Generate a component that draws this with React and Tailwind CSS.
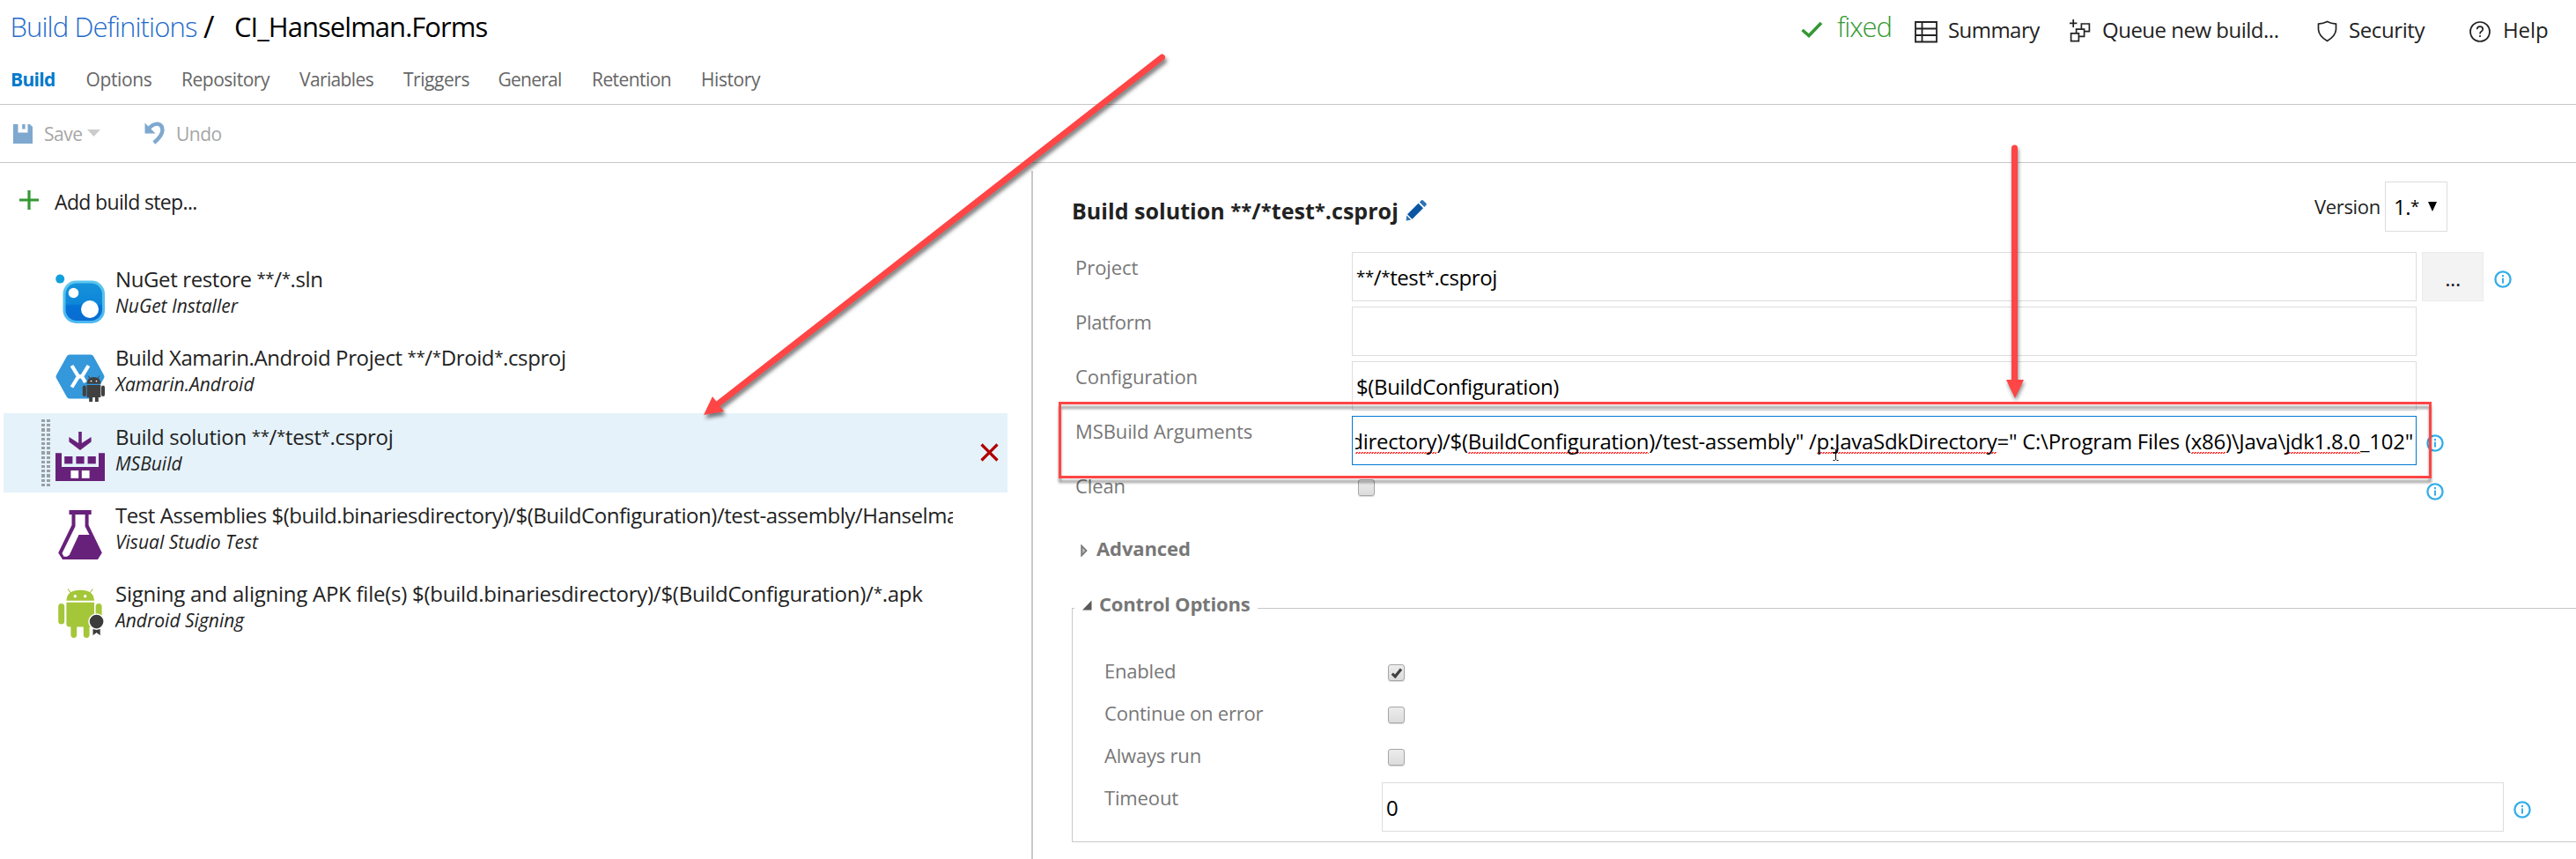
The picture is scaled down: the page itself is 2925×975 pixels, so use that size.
import React from "react";

/* Text in which asterisks are drawn smaller and raised. */
function Glob({ text, bold }) {
  const star = bold
    ? "text-[0.88em] leading-[0] align-[0.1em]"
    : "text-[0.78em] leading-[0] align-[0.17em]";
  return text.split(/(\*)/).map((part, i) =>
    part === "*" ? (
      <span key={i} className={star}>*</span>
    ) : (
      <React.Fragment key={i}>{part}</React.Fragment>
    )
  );
}

/* ---------- Icons ---------- */

function InfoIcon({ className = "" }) {
  return (
    <svg className={"h-[20px] w-[20px] shrink-0 " + className} viewBox="0 0 20 20" fill="none">
      <circle cx="10" cy="10" r="8.6" stroke="#35aee8" strokeWidth="2.3" />
      <rect x="9" y="5" width="2" height="2.2" fill="#35aee8" />
      <rect x="9" y="8.6" width="2" height="6" fill="#35aee8" />
    </svg>
  );
}

function CheckBox({ checked, className = "" }) {
  return (
    <span
      className={
        "flex h-[19px] w-[19px] shrink-0 items-center justify-center rounded-[3px] border-[1.5px] border-[#a6a6a6] bg-linear-to-b from-[#ececec] to-[#dcdcdc] shadow-[0_1px_1px_rgba(0,0,0,0.15)] " +
        className
      }
    >
      {checked && (
        <svg className="h-[14px] w-[14px]" viewBox="0 0 14 14" fill="none">
          <path d="M1.8 7.6 L5.2 10.8 L12 2.4" stroke="#404040" strokeWidth="3.2" />
        </svg>
      )}
    </span>
  );
}

function NuGetIcon() {
  return (
    <svg className="h-[56px] w-[56px]" viewBox="0 0 56 56">
      <defs>
        <linearGradient id="nuget-body" x1="0" y1="0" x2="0" y2="1">
          <stop offset="0" stopColor="#1592da" />
          <stop offset="0.55" stopColor="#0e86d8" />
          <stop offset="0.6" stopColor="#0472d6" />
          <stop offset="1" stopColor="#0a6cd0" />
        </linearGradient>
        <linearGradient id="nuget-rim" x1="0" y1="0" x2="0" y2="1">
          <stop offset="0" stopColor="#5cc6ee" />
          <stop offset="1" stopColor="#4cb8f2" />
        </linearGradient>
      </defs>
      <circle cx="5.2" cy="5.6" r="5" fill="#12a0dc" />
      <rect x="8.5" y="7.5" width="47.5" height="48.5" rx="15" fill="url(#nuget-rim)" />
      <rect x="11.5" y="10.5" width="41.5" height="42.5" rx="12.5" fill="url(#nuget-body)" />
      <circle cx="20.5" cy="21.5" r="5.8" fill="#fff" />
      <circle cx="39" cy="40" r="10" fill="#fff" />
    </svg>
  );
}

function XamarinIcon() {
  return (
    <svg className="h-[56px] w-[56px]" viewBox="0 0 56 56">
      <path
        d="M16 3.5 H40 Q41.5 3.5 42.3 5 L54 26 Q55 27.5 54 29 L42.3 50 Q41.5 51.5 40 51.5 H16 Q14.5 51.5 13.7 50 L2 29 Q1 27.5 2 26 L13.7 5 Q14.5 3.5 16 3.5 Z"
        fill="#3498db"
        stroke="#3498db"
        strokeWidth="2"
      />
      <path d="M18.5 15 L26 27.3 L18.5 39.5 M37.5 15 L30 27.3 L34 34" stroke="#fff" strokeWidth="4.2" fill="none" />
      <path d="M24 27.3 H32" stroke="#fff" strokeWidth="4.5" />
      <g fill="#404040">
        <rect x="30.8" y="37.5" width="4" height="12.5" rx="2" />
        <rect x="52" y="37.5" width="4" height="12.5" rx="2" />
        <path d="M35.6 35.8 Q35.6 28 43.5 28 Q51.4 28 51.4 35.8 Z" />
        <path d="M35.6 37 H51.4 V51 H48.8 V56 H44.9 V51 H42.1 V56 H38.2 V51 H35.6 Z" />
        <path d="M37 26.5 L39.5 30 M50 26.5 L47.5 30" stroke="#404040" strokeWidth="1" />
      </g>
      <circle cx="40.5" cy="32.6" r="0.9" fill="#fff" />
      <circle cx="46.5" cy="32.6" r="0.9" fill="#fff" />
    </svg>
  );
}

function MSBuildIcon() {
  return (
    <svg className="h-[56px] w-[56px]" viewBox="0 0 56 56">
      <g fill="#68217a">
        <path d="M26.2 0 H29.8 V13 L40.6 6 V11.5 L28 21 L15.4 11.5 V6 L26.2 13 Z" />
        <path d="M0 24.3 H7 V40 H49 V24.3 H56 V56 H0 Z" />
        <rect x="10.2" y="28" width="9.2" height="8.4" />
        <rect x="23.4" y="28" width="9.2" height="8.4" />
        <rect x="36.6" y="28" width="9.2" height="8.4" />
      </g>
      <rect x="17.4" y="44" width="8.8" height="8.8" fill="#fff" />
      <rect x="29.8" y="44" width="8.8" height="8.8" fill="#fff" />
    </svg>
  );
}

function FlaskIcon() {
  return (
    <svg className="h-[56px] w-[56px]" viewBox="0 0 56 56">
      <path
        fill="#68217a"
        fillRule="evenodd"
        d="M15.5 0 H40.7 V5 H37.6 V17 L52.8 48.5 L48 56 H8 L3.2 48.5 L18.5 17 V5 H15.5 Z M22.5 5 V18.5 L7.5 49 L9.5 52.8 H13 L15.8 51 L26.5 28 H38.5 L33.6 18.5 V5 Z"
      />
    </svg>
  );
}

function AndroidSigningIcon() {
  return (
    <svg className="h-[56px] w-[56px]" viewBox="0 0 56 56">
      <g fill="#a4c639">
        <path d="M12.4 13.8 Q13 5 20.5 2.8 Q28 0.6 36 2.8 Q43.4 5 44 13.8 Z" />
        <path d="M14 0.5 L17.5 5 M42.4 0.5 L38.9 5" stroke="#a4c639" strokeWidth="1.2" />
        <path d="M12.4 15.8 H44 V40 Q44 43.5 40.5 43.5 H38.6 V52.6 A3.4 3.4 0 0 1 31.8 52.6 V43.5 H24.2 V52.6 A3.4 3.4 0 0 1 17.4 52.6 V43.5 H15.9 Q12.4 43.5 12.4 40 Z" />
        <rect x="3.2" y="17" width="7" height="23.5" rx="3.5" />
        <rect x="45.6" y="17" width="7" height="23.5" rx="3.5" />
      </g>
      <circle cx="22.3" cy="8.8" r="1.7" fill="#fff" />
      <circle cx="33.7" cy="8.8" r="1.7" fill="#fff" />
      <path d="M42 44 H51.2 V54 L46.6 50.6 L42 54 Z" fill="#3c3c3c" stroke="#fff" strokeWidth="1" />
      <circle cx="46.6" cy="37.6" r="8.6" fill="#3c3c3c" stroke="#fff" strokeWidth="1.6" />
    </svg>
  );
}

/* ---------- Header ---------- */

const TABS = [
  ["Options", "w-[108.5px] tracking-[-0.36px]"],
  ["Repository", "w-[134px] tracking-[-0.48px]"],
  ["Variables", "w-[118px] tracking-[-0.63px]"],
  ["Triggers", "w-[107.5px] tracking-[-0.46px]"],
  ["General", "w-[106.5px] tracking-[-0.76px]"],
  ["Retention", "w-[124px] tracking-[-0.58px]"],
  ["History", "tracking-[-0.43px]"],
];

function Header() {
  return (
    <header className="h-[119px] border-b border-[#c8c8c8]">
      <div className="flex h-[60px] leading-[60px]">
        <div className="flex w-[2045px] pl-[11.5px] text-[31px]">
          <span className="w-[219.5px] font-light tracking-[-0.89px] text-[#1f6bcb]">Build Definitions</span>
          <span className="w-[35px] text-[34px] text-black">/</span>
          <span className="tracking-[-0.97px] text-black">CI_Hanselman.Forms</span>
        </div>
        <div className="w-[41px] pt-[24px]">
          <svg className="h-[20px] w-[25px]" viewBox="0 0 25 20" fill="none">
            <path d="M1.5 10 L9 16.5 L23 2" stroke="#339933" strokeWidth="3.6" />
          </svg>
        </div>
        <span className="w-[88px] text-[31px] font-light tracking-[-1.05px] text-[#339933]">fixed</span>
        <div className="flex pt-[4px] text-[24px] text-[#222]">
          <div className="w-[38px] pt-[20px]">
            <svg className="h-[25px] w-[26px]" viewBox="0 0 26 25" fill="none" stroke="#222" strokeWidth="1.8">
              <path d="M1 1 H25 V23.5 H1 Z M1 8.5 H25 M1 16 H25 M8.5 1 V23.5" />
            </svg>
          </div>
          <span className="w-[138px] tracking-[-0.55px]">Summary</span>
          <div className="w-[37px] pt-[18px]">
            <svg className="h-[27px] w-[24px]" viewBox="0 0 24 27" fill="none" stroke="#222" strokeWidth="1.7">
              <path d="M4.2 0 V9 M0 4.4 H8.4" />
              <path d="M1.6 15.8 H10.4 V24.6 H1.6 Z" />
              <path d="M7.6 15.8 V11.2 H16.6 V19.4 H10.4" />
              <path d="M13.4 11.2 V5 H22.4 V13.6 H16.6" />
            </svg>
          </div>
          <span className="w-[244px] tracking-[-0.5px]">Queue new build...</span>
          <div className="w-[36px] pt-[19px]">
            <svg className="h-[25px] w-[23px]" viewBox="0 0 23 25" fill="none" stroke="#222" strokeWidth="1.7">
              <path d="M11.5 1.5 Q15.5 3.6 21.5 4.2 V10.5 Q21 18 11.5 23.4 Q2 18 1.5 10.5 V4.2 Q7.5 3.6 11.5 1.5 Z" />
            </svg>
          </div>
          <span className="w-[137px] tracking-[-0.4px]">Security</span>
          <div className="w-[38px] pt-[20px]">
            <svg className="h-[24px] w-[24px]" viewBox="0 0 24 24" fill="none" stroke="#222" strokeWidth="1.7">
              <circle cx="12" cy="12" r="11" />
              <path d="M8.6 9.3 Q8.8 6.2 12 6.2 Q15.2 6.2 15.2 9 Q15.2 10.7 13.4 11.8 Q12 12.7 12 14.4" />
              <path d="M12 16 V18" />
            </svg>
          </div>
          <span className="tracking-[-0.1px]">Help</span>
        </div>
      </div>
      <nav className="flex h-[58px] pt-0.5 pl-[12px] text-[21px] leading-[56px] text-[#666]">
        <span className="w-[85.5px] font-bold tracking-[-0.7px] text-[#007acc]">Build</span>
        {TABS.map(([label, cls]) => (
          <span key={label} className={cls}>{label}</span>
        ))}
      </nav>
    </header>
  );
}

function Toolbar() {
  return (
    <div className="flex h-[66px] border-b border-[#c8c8c8] pl-[15px] text-[21px] leading-[67px] text-[#a6a6a6]">
      <div className="w-[35px] pt-[22px]">
        <svg className="h-[22px] w-[22px]" viewBox="0 0 22 22">
          <path fill="#7fa8cf" fillRule="evenodd" d="M0 0 H19 L22 3 V22 H0 Z M5.5 0 V9.5 H16.5 V0 H13.6 V5.6 H10.2 V0 Z" />
        </svg>
      </div>
      <span className="w-[49px] tracking-[-0.5px]">Save</span>
      <div className="w-[65px] pt-[28px]">
        <svg className="h-[8px] w-[15px]" viewBox="0 0 15 8"><path d="M0 0 H15 L7.5 8 Z" fill="#ccc" /></svg>
      </div>
      <div className="w-[36px] pt-[19px]">
        <svg className="h-[26px] w-[24px]" viewBox="0 0 24 26" fill="none">
          <path d="M5 8 Q9.5 2.4 15 2.6 Q20.6 3.4 20.4 10.5 Q19.8 16.5 10.8 24" stroke="#7fa8cf" strokeWidth="4.4" />
          <path d="M0.5 1.5 V13.5 H12.5 Z" fill="#7fa8cf" />
        </svg>
      </div>
      <span className="tracking-[-0.5px]">Undo</span>
    </div>
  );
}

/* ---------- Steps ---------- */

const STEPS = [
  { icon: NuGetIcon, title: "NuGet restore **/*.sln", sub: "NuGet Installer", cls: "tracking-[-0.38px]" },
  { icon: XamarinIcon, title: "Build Xamarin.Android Project **/*Droid*.csproj", sub: "Xamarin.Android", cls: "tracking-[-0.39px]" },
  { icon: MSBuildIcon, title: "Build solution **/*test*.csproj", sub: "MSBuild", cls: "tracking-[-0.35px]", active: true },
  {
    icon: FlaskIcon,
    title: "Test Assemblies $(build.binariesdirectory)/$(BuildConfiguration)/test-assembly/Hanselman",
    sub: "Visual Studio Test",
    cls: "tracking-[-0.45px]",
  },
  {
    icon: AndroidSigningIcon,
    title: "Signing and aligning APK file(s) $(build.binariesdirectory)/$(BuildConfiguration)/*.apk",
    sub: "Android Signing",
    cls: "tracking-[-0.25px]",
  },
];

function Step({ icon: Icon, title, sub, cls, active }) {
  return (
    <li className={"ml-[4px] flex w-[1140px] " + (active ? "h-[90px] bg-[#e5f2fa] pt-px" : "h-[89px]")}>
      <div className="flex w-[59px] shrink-0 gap-[2px] pt-[6px] pl-[43px]">
        {active && (
          <>
            <i className="h-[76px] w-[4px] bg-[repeating-linear-gradient(#98a0a6_0_3.2px,transparent_3.2px_5.2px)]" />
            <i className="h-[76px] w-[4px] bg-[repeating-linear-gradient(#98a0a6_0_3.2px,transparent_3.2px_5.2px)]" />
          </>
        )}
      </div>
      <div className="w-[68px] shrink-0 pt-[20px]"><Icon /></div>
      <div className="w-[951px] shrink-0 overflow-hidden pt-[10px] whitespace-nowrap text-[#222]">
        <div className={"text-[24px] leading-[32px] " + cls}><Glob text={title} /></div>
        <div className="text-[21px] leading-[29px] italic">{sub}</div>
      </div>
      {active && (
        <svg className="mt-[33px] ml-[31px] h-[21px] w-[21px] shrink-0" viewBox="0 0 21 21">
          <path d="M1.5 1.5 L19.5 19.5 M19.5 1.5 L1.5 19.5" stroke="#b00000" strokeWidth="3.2" />
        </svg>
      )}
    </li>
  );
}

function Steps() {
  return (
    <section className="w-[1171px] shrink-0">
      <div className="flex h-[87px] pl-[22px] leading-[88px]">
        <div className="w-[40px] pt-[31px]">
          <svg className="h-[22px] w-[22px]" viewBox="0 0 22 22">
            <path d="M11 0 V22 M0 11 H22" stroke="#339933" strokeWidth="3.2" />
          </svg>
        </div>
        <span className="text-[23px] tracking-[-0.65px] text-[#222]">Add build step...</span>
      </div>
      <ul className="mt-[19px]">
        {STEPS.map((s) => <Step key={s.sub} {...s} />)}
      </ul>
    </section>
  );
}

/* ---------- Form ---------- */

function Field({ label, labelClass = "", children }) {
  return (
    <div className="mb-[6px] flex h-[56px]">
      <span className={"w-[315px] pl-px text-[22px] leading-[34px] text-[#777] " + labelClass}>{label}</span>
      {children}
    </div>
  );
}

function Wavy({ children }) {
  return (
    <span className="bg-[repeating-conic-gradient(#f33_0_25%,transparent_0_50%)] bg-[length:3px_2px] bg-[position:left_0_bottom_2px] bg-repeat-x">
      {children}
    </span>
  );
}

const BOX = "h-[56px] w-[1209px] border text-[24px] leading-[56px] text-black";

function Details() {
  return (
    <section className="min-w-0 flex-1 overflow-hidden">
      <div className="flex h-[101px] pl-[44px]">
        <div className="flex w-[1411px] pt-[34px]">
          <h2 className="text-[25px] leading-[40px] font-bold tracking-[0.04px] text-[#222]">
            <Glob bold text="Build solution **/*test*.csproj" />
          </h2>
          <svg className="mt-[7px] ml-[8px] h-[25px] w-[25px]" viewBox="0 0 25 25">
            <path d="M14.5 4.8 L20 10.3 L7.5 22.8 L2 17.3 Z" fill="#0a56a3" />
            <path d="M15.8 3.5 L18 1.3 Q19 0.6 20 1.4 L23.4 4.8 Q24.2 5.8 23.4 6.9 L21.3 9 Z" fill="#2f74b5" />
            <path d="M1.2 18.6 L6.2 23.6 L0.6 24.4 Z" fill="#2f74b5" />
          </svg>
        </div>
        <span className="w-[80px] pt-[21px] text-[22px] leading-[57px] tracking-[-0.35px] text-[#222]">Version</span>
        <div className="mt-[21px] flex h-[57px] w-[71px] border border-[#ddd] pl-[9px] text-[24px] leading-[56px] text-black">
          <span className="w-[39px] tracking-[-0.5px]"><Glob text="1.*" /></span>
          <svg className="mt-[22px] h-[11px] w-[10px]" viewBox="0 0 10 11"><path d="M0 0 H10 L5 11 Z" /></svg>
        </div>
      </div>

      <div className="pl-[47px]">
        <Field label="Project" labelClass="tracking-[-0.05px]">
          <div className={BOX + " border-[#ddd] pl-[4px] tracking-[-0.4px]"}><Glob text="**/*test*.csproj" /></div>
          <div className="ml-[6px] h-[56px] w-[70px] border border-[#ebebeb] bg-[#f3f3f3] text-center text-[24px] leading-[57px] tracking-[-0.5px] text-[#222]">...</div>
          <InfoIcon className="mt-[21px] ml-[12px]" />
        </Field>
        <Field label="Platform" labelClass="tracking-[-0.3px]">
          <div className={BOX + " border-[#ddd]"} />
        </Field>
        <Field label="Configuration" labelClass="tracking-[-0.1px]">
          <div className={BOX + " border-[#ddd] pl-[4px] tracking-[-0.38px]"}>$(BuildConfiguration)</div>
        </Field>
        <Field label="MSBuild Arguments" labelClass="tracking-[-0.1px]">
          <div className={BOX + " flex border-[#0078d4] px-[3px]"}>
            <div className="flex min-w-0 flex-1 justify-end overflow-hidden tracking-[-0.26px] whitespace-pre">
              <span>
                <Wavy>directory</Wavy>)/$(<Wavy>BuildConfiguration</Wavy>)/test-assembly" /<Wavy>p:JavaSdkDirectory</Wavy>=" C:\Program Files (<Wavy>x86</Wavy>)\Java\<Wavy>jdk1.8.0</Wavy>_102"
              </span>
            </div>
          </div>
          <InfoIcon className="mt-[21px] ml-[11px]" />
        </Field>
        <div className="flex h-[56px]">
          <span className="w-[322px] pl-px text-[22px] leading-[34px] tracking-[-0.1px] text-[#777]">Clean</span>
          <CheckBox className="mt-[10px]" />
          <InfoIcon className="mt-[14px] ml-[1194px]" />
        </div>
        <div className="flex h-[63px] pl-[7px]">
          <svg className="mt-[28px] h-[14px] w-[18px]" viewBox="0 0 18 14" fill="none">
            <path d="M1.2 1.5 L6.5 7 L1.2 12.5 Z" fill="#bbb" stroke="#777" strokeWidth="1.8" />
          </svg>
          <span className="text-[22px] leading-[64px] font-bold tracking-[-0.1px] text-[#777]">Advanced</span>
        </div>
      </div>

      <div className="mt-[37px] ml-[44px] h-[266px] w-[1800px] border border-[#c8c8c8]">
        <div className="mt-[-22px] ml-[2px] flex h-[32px] w-[208px] bg-white pl-[9px]">
          <svg className="mt-[12px] h-[12px] w-[19px]" viewBox="0 0 19 12"><path d="M10.5 0.5 V11.5 H0 Z" fill="#5a5a5a" /></svg>
          <span className="text-[22px] leading-[32px] font-bold tracking-[-0.2px] text-[#777]">Control Options</span>
        </div>
        <div className="pt-[35px] pl-[36px] text-[22px] leading-[50px] text-[#777]">
          <div className="flex h-[48px]">
            <span className="w-[322px] tracking-[-0.2px]">Enabled</span>
            <CheckBox checked className="mt-[18px]" />
          </div>
          <div className="flex h-[48px]">
            <span className="w-[322px] tracking-[-0.22px]">Continue on error</span>
            <CheckBox className="mt-[18px]" />
          </div>
          <div className="flex h-[48px]">
            <span className="w-[322px] tracking-[-0.2px]">Always run</span>
            <CheckBox className="mt-[18px]" />
          </div>
          <div className="flex h-[64px]">
            <span className="w-[315px] tracking-[-0.15px]">Timeout</span>
            <div className="mt-[8px] h-[56px] w-[1274px] border border-[#ddd] pl-[4px] text-[24px] leading-[56px] text-black">0</div>
            <InfoIcon className="mt-[29px] ml-[11px]" />
          </div>
        </div>
      </div>
    </section>
  );
}

/* ---------- Annotations drawn over the page ---------- */

function Annotations() {
  return (
    <svg className="pointer-events-none absolute top-0 left-0 h-[975px] w-[2925px]" viewBox="0 0 2925 975" fill="none">
      <g className="[filter:drop-shadow(2px_4px_2px_rgba(0,0,0,0.5))]">
        <path d="M1319.5 65 L814 459.5" stroke="#ff4545" strokeWidth="7" strokeLinecap="round" />
        <path d="M799 471 L809 450 L822 467 Z" fill="#ff4545" />
      </g>
      <g className="[filter:drop-shadow(1px_3px_2px_rgba(0,0,0,0.45))]">
        <path d="M2287.5 168 V434" stroke="#ff4545" strokeWidth="7" strokeLinecap="round" />
        <path d="M2278 431 H2298 L2288 452 Z" fill="#ff4545" />
      </g>
      <rect
        className="[filter:drop-shadow(0px_5px_1.5px_rgba(0,0,0,0.38))]"
        x="1203.5" y="457.5" width="1556" height="84" stroke="#ff4545" strokeWidth="3"
      />
      <path d="M2081.5 509.5 H2083.5 M2085.5 509.5 H2087.5 M2084.5 510 V522 M2081.5 522.5 H2083.5 M2085.5 522.5 H2087.5" stroke="#000" strokeWidth="1" />
    </svg>
  );
}

export default function App() {
  return (
    <div className="relative h-[975px] w-[2925px] overflow-hidden bg-white font-['Open_Sans','Noto_Sans',sans-serif]">
      <Header />
      <Toolbar />
      <div className="flex h-[790px]">
        <Steps />
        <div className="mt-[9px] w-[2px] shrink-0 bg-[#c8c8c8]" />
        <Details />
      </div>
      <Annotations />
    </div>
  );
}
